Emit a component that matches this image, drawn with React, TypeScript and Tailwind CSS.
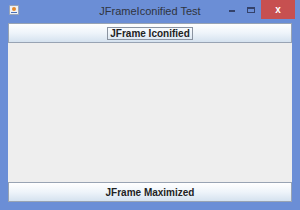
export default function App() {
  return (
    <div className="flex h-[210px] w-[300px] flex-col bg-[#6b8ed6] font-['Liberation_Sans',sans-serif]">
      {/* Title bar */}
      <div className="relative flex h-[23px] shrink-0 items-center justify-center">
        <div className="absolute left-[9px] top-[5px] h-[10px] w-[10px] rounded-[1px] border border-[#9aa4b6] bg-[#eef1f6]">
          <div className="ml-[2px] mt-[1px] h-[4px] w-[4px] rounded-full bg-[#e58a2a]" />
          <div className="ml-[1px] mt-[1px] h-[1px] w-[6px] bg-[#4a6fb5]" />
        </div>
        <span className="text-[11px] text-[#2f3440]">JFrameIconified Test</span>
        <div className="absolute left-[229px] top-[10px] h-[2px] w-[6px] bg-[#34426a]" />
        <div className="absolute left-[247px] top-[7px] h-[6px] w-[8px] border border-t-2 border-[#34426a]" />
        <div className="absolute left-[261px] top-0 flex h-[19px] w-[34px] items-center justify-center bg-[#c75050]">
          <span className="text-[10px] font-bold leading-none text-white">x</span>
        </div>
      </div>
      {/* Content */}
      <div className="mx-[8px] flex flex-1 flex-col bg-[#eeeeee]">
        <button
          type="button"
          className="flex h-[20px] shrink-0 items-center justify-center border border-[#98a3b3] bg-gradient-to-b from-[#ffffff] via-[#eef4fa] to-[#d5e2ef]"
        >
          <span className="border border-[#8a93a0] px-[2px] text-[10px] font-bold leading-[11px] text-[#222]">
            JFrame Iconified
          </span>
        </button>
        <div className="flex-1" />
        <button
          type="button"
          className="flex h-[20px] shrink-0 items-center justify-center border border-[#98a3b3] bg-gradient-to-b from-[#ffffff] via-[#eef4fa] to-[#d5e2ef]"
        >
          <span className="text-[10px] font-bold leading-[11px] text-[#222]">JFrame Maximized</span>
        </button>
      </div>
      <div className="h-[8px] shrink-0" />
    </div>
  );
}
